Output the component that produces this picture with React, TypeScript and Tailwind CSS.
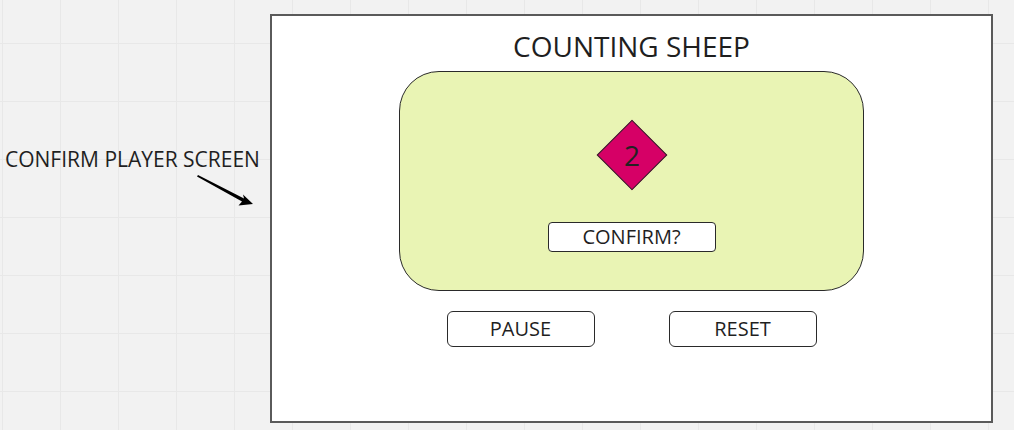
export default function App() {
  return (
    <div
      className="flex h-[430px] w-[1014px] overflow-hidden bg-[#f2f2f2] bg-[linear-gradient(to_right,#e8e8e8_1px,transparent_1px),linear-gradient(to_bottom,#e8e8e8_1px,transparent_1px)] bg-[size:58px_58px] bg-[position:2px_-15px] text-[#1f1f1f]"
      style={{ fontFamily: '"Open Sans", sans-serif' }}
    >
      {/* annotation */}
      <div className="w-[270px] shrink-0 pt-[145px] pl-[5px]">
        <p className="whitespace-nowrap text-[21px] leading-[28px]">CONFIRM PLAYER SCREEN</p>
        <svg width="70" height="40" viewBox="0 0 70 40" className="ml-[190px] mt-[-1px]">
          <polygon points="3,3 49,26.5 48,22.5 58,32 43.5,33.5 47,29.5 2,4.5" fill="#000" />
        </svg>
      </div>

      {/* screen frame */}
      <div className="mt-[14px] flex h-[409px] w-[723px] shrink-0 flex-col items-center border-2 border-[#5a5a5a] bg-white">
        <h1 className="mt-[12px] text-[28px] leading-[36px]">COUNTING SHEEP</h1>

        <div className="mt-[7px] flex h-[220px] w-[465px] flex-col items-center rounded-[40px] border border-[#2a2a2a] bg-[#e9f4b4]">
          <div className="mt-[47px] flex h-[71px] w-[71px] items-center justify-center">
            <div className="flex h-[50px] w-[50px] rotate-45 items-center justify-center border border-[#2a2a2a] bg-[#d60066]">
              <span className="-rotate-45 text-[28px] leading-none text-[#222]">2</span>
            </div>
          </div>
          <button className="mt-[32px] flex h-[30px] w-[168px] items-center justify-center rounded-[4px] border border-[#2a2a2a] bg-white text-[20px] leading-none">
            CONFIRM?
          </button>
        </div>

        <div className="mt-[20px] flex gap-[74px]">
          <button className="flex h-[36px] w-[148px] items-center justify-center rounded-[6px] border border-[#2a2a2a] bg-white text-[20px] leading-none">
            PAUSE
          </button>
          <button className="flex h-[36px] w-[148px] items-center justify-center rounded-[6px] border border-[#2a2a2a] bg-white text-[20px] leading-none">
            RESET
          </button>
        </div>
      </div>
    </div>
  );
}
